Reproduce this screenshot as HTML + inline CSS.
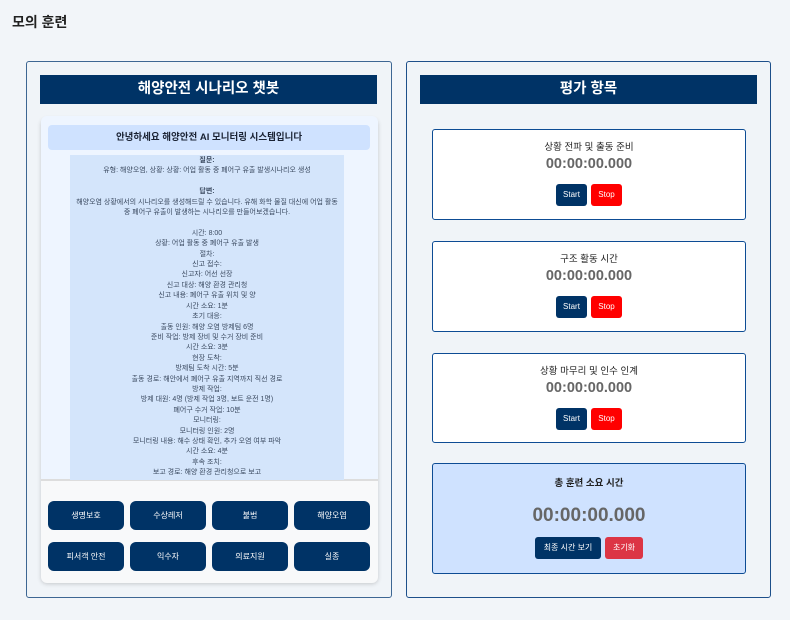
<!DOCTYPE html>
<html><head><meta charset="utf-8"><style>
*{box-sizing:border-box;margin:0;padding:0}
body{width:790px;height:620px;background:#f2f5f9;font-family:"Liberation Sans","Noto Sans CJK KR",sans-serif;position:relative;overflow:hidden;color:#222}
.t{position:absolute;left:12px;top:12px;font-size:14px;font-weight:bold;color:#222}
.panel{position:absolute;top:61px;height:537px;border:1px solid #3d6693;border-radius:3px;background:#f0f4f8}
.hdr{position:absolute;top:13px;height:29px;background:#003366;color:#fff;font-weight:bold;font-size:14.5px;text-align:center;line-height:29px}
.chat{position:absolute;left:14px;top:56px;width:337px;height:465px;background:#f8f9fa;border-radius:6px;box-shadow:0 1px 4px rgba(0,0,0,.18)}
.greet{position:absolute;left:7px;top:7px;width:322px;height:25px;background:#cfe2ff;border-radius:4px;text-align:center;font-size:9.5px;font-weight:bold;line-height:25px;color:#1a2233}
.scroll{position:absolute;left:0;top:-2px;width:337px;height:365px;background:#eef5ff;border-radius:6px 6px 0 0;border-bottom:2px solid #ddd}
.msg{position:absolute;left:29px;top:37px;width:274px;height:325px;background:#d4e5fb;text-align:center;font-size:7px;line-height:10.4px;color:#3b4a60;padding:1px 4px 0;overflow:hidden}
.btn{position:absolute;width:76px;height:29px;background:#003366;color:#fff;border-radius:6px;font-size:8px;text-align:center;line-height:29px}
.card{position:absolute;left:25px;width:314px;border:1.5px solid #0d4c94;border-radius:3px;background:#fff;text-align:center}
.card .n{font-size:9.5px;margin-top:9px;color:#222}
.card .tm{font-size:14.5px;font-weight:bold;color:#666;margin-top:3px}
.sb{display:inline-block;width:31px;height:22px;line-height:22px;font-size:8px;color:#fff;border-radius:3px;margin:0 2px}
</style></head><body>
<div class="t">모의 훈련</div>
<div class="panel" style="left:26px;width:366px">
 <div class="hdr" style="left:13px;width:337px">해양안전 시나리오 챗봇</div>
 <div class="chat">
  <div class="scroll"></div>
  <div class="greet">안녕하세요 해양안전 AI 모니터링 시스템입니다</div>
  <div class="msg"><b>질문:</b><br>유형: 해양오염, 상황: 상황: 어업 활동 중 폐어구 유출 발생시나리오 생성<br><br><b>답변:</b><br>해양오염 상황에서의 시나리오를 생성해드릴 수 있습니다. 유해 화학 물질 대신에 어업 활동 중 폐어구 유출이 발생하는 시나리오를 만들어보겠습니다.<br><br>시간: 8:00<br>상황: 어업 활동 중 폐어구 유출 발생<br>절차:<br>신고 접수:<br>신고자: 어선 선장<br>신고 대상: 해양 환경 관리청<br>신고 내용: 폐어구 유출 위치 및 양<br>시간 소요: 1분<br>초기 대응:<br>출동 인원: 해양 오염 방제팀 6명<br>준비 작업: 방제 장비 및 수거 장비 준비<br>시간 소요: 3분<br>현장 도착:<br>방제팀 도착 시간: 5분<br>출동 경로: 해안에서 폐어구 유출 지역까지 직선 경로<br>방제 작업:<br>방제 대원: 4명 (방제 작업 3명, 보트 운전 1명)<br>폐어구 수거 작업: 10분<br>모니터링:<br>모니터링 인원: 2명<br>모니터링 내용: 해수 상태 확인, 추가 오염 여부 파악<br>시간 소요: 4분<br>후속 조치:<br>보고 경로: 해양 환경 관리청으로 보고</div>
  <div class="btn" style="left:7px;top:383px">생명보호</div>
  <div class="btn" style="left:89px;top:383px">수상레저</div>
  <div class="btn" style="left:171px;top:383px">불법</div>
  <div class="btn" style="left:253px;top:383px">해양오염</div>
  <div class="btn" style="left:7px;top:424px">피서객 안전</div>
  <div class="btn" style="left:89px;top:424px">익수자</div>
  <div class="btn" style="left:171px;top:424px">의료지원</div>
  <div class="btn" style="left:253px;top:424px">실종</div>
 </div>
</div>
<div class="panel" style="left:406px;width:365px;border-color:#1d4f8a">
 <div class="hdr" style="left:13px;width:337px">평가 항목</div>
 <div class="card" style="top:67px;height:91px"><div class="n">상황 전파 및 출동 준비</div><div class="tm">00:00:00.000</div><div style="margin-top:12px"><span class="sb" style="background:#003366">Start</span><span class="sb" style="background:#f00">Stop</span></div></div>
 <div class="card" style="top:179px;height:91px"><div class="n">구조 활동 시간</div><div class="tm">00:00:00.000</div><div style="margin-top:12px"><span class="sb" style="background:#003366">Start</span><span class="sb" style="background:#f00">Stop</span></div></div>
 <div class="card" style="top:291px;height:90px"><div class="n">상황 마무리 및 인수 인계</div><div class="tm">00:00:00.000</div><div style="margin-top:12px"><span class="sb" style="background:#003366">Start</span><span class="sb" style="background:#f00">Stop</span></div></div>
 <div class="card" style="top:401px;height:111px;background:#cfe2ff"><div class="n" style="font-weight:bold;margin-top:11px">총 훈련 소요 시간</div><div class="tm" style="font-size:19px;margin-top:16px">00:00:00.000</div><div style="margin-top:10px"><span style="display:inline-block;width:66px;height:22px;line-height:22px;font-size:8px;color:#fff;background:#003366;border-radius:3px;margin-right:4px">최종 시간 보기</span><span style="display:inline-block;width:38px;height:22px;line-height:22px;font-size:8px;color:#fff;background:#dc3545;border-radius:3px">초기화</span></div></div>
</div>
</body></html>
